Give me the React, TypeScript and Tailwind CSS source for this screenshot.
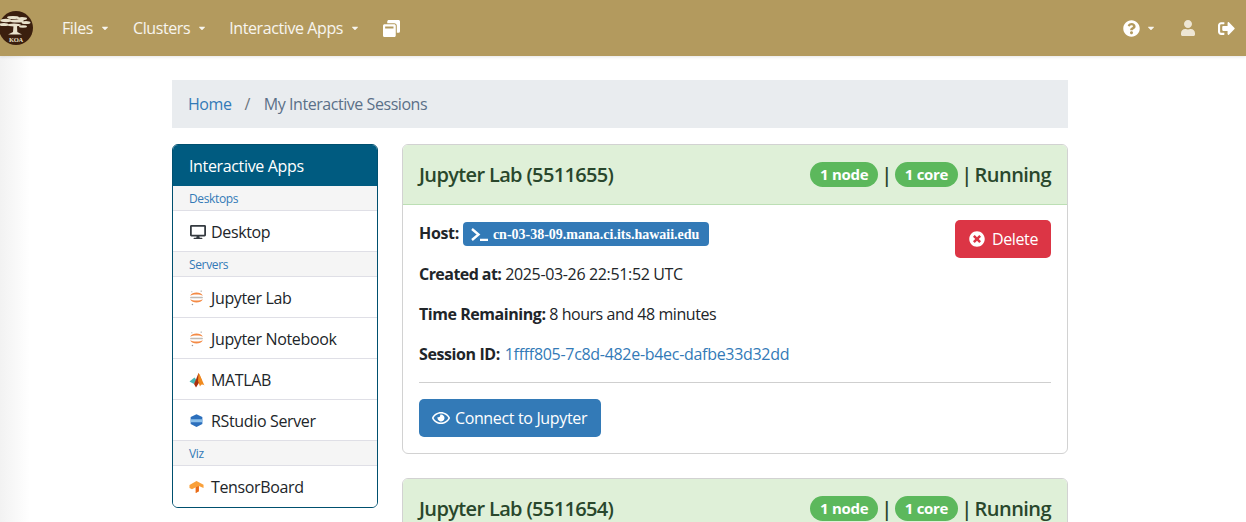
import React from "react";
import { FaCaretDown, FaWindowRestore, FaQuestionCircle, FaUser, FaSignOutAlt, FaDesktop, FaTimesCircle, FaRegEye } from "react-icons/fa";

const JupyterIcon = () => (
  <svg viewBox="0 0 16 16" className="w-[17px] h-[17px] shrink-0 -ml-[2px] opacity-85">
    <path d="M2 6.4 C4 2.4 12 2.4 14 6.4 C11.5 4.8 4.5 4.8 2 6.4Z" fill="#f37726" />
    <path d="M2 9.6 C4 13.6 12 13.6 14 9.6 C11.5 11.2 4.5 11.2 2 9.6Z" fill="#f37726" />
    <rect x="2" y="7.2" width="12" height="1.6" rx="0.8" fill="#b5aea8" />
    <circle cx="12.4" cy="2" r="0.7" fill="#8a8a8a" />
    <circle cx="3.6" cy="2.6" r="0.5" fill="#8a8a8a" />
    <circle cx="4.2" cy="14.6" r="0.7" fill="#8a8a8a" />
  </svg>
);
const MatlabIcon = () => (
  <svg viewBox="0 0 16 16" className="w-[16px] h-[16px] shrink-0 -ml-[1px]">
    <path d="M0.5 9.5 L5.5 5.5 L7.5 8 L5 12Z" fill="#49b6b6" />
    <path d="M5 12 L7 7.5 L9.5 1 L12.5 7.5 L10.5 10 L7 15.5 Z" fill="#a92f0d" />
    <path d="M9.5 1 C11.5 3 13.5 10 15.5 13.5 C14 12.5 12.5 11.5 11 14.5 L9 9Z" fill="#f08a1e" />
  </svg>
);
const RStudioIcon = () => (
  <svg viewBox="0 0 16 16" className="w-[17px] h-[17px] shrink-0 -ml-[2.5px]">
    <path d="M8 2 L13.5 4.8 V11.2 L8 14 L2.5 11.2 V4.8Z" fill="#2c6fbc" />
    <path d="M2.5 6.8 H13.5 V9.6 H2.5Z" fill="#8cc0ea" />
  </svg>
);
const TensorIcon = () => (
  <svg viewBox="0 0 16 16" className="w-[15px] h-[15px] shrink-0 -ml-[1px]">
    <path d="M0.5 6.5 L8 2 L15.5 6 V9.5 L10.5 7.5 V13 L7.2 15 V8.8 L3.2 11 L0.5 9.5Z" fill="#f9a03a" />
    <path d="M7.2 8.8 L10.5 7.5 V13 L7.2 15Z" fill="#e8691a" />
  </svg>
);

const KoaLogo = () => (
  <svg viewBox="0 0 36 40" className="w-[36px] h-[40px] -ml-[2px]">
    <circle cx="18" cy="20" r="17" fill="#3b1f0e" />
    <g fill="#e9e2cc">
      <ellipse cx="15" cy="9.5" rx="6" ry="1.6" />
      <ellipse cx="24" cy="10.5" rx="5" ry="1.5" />
      <ellipse cx="8" cy="12.5" rx="5.5" ry="1.7" />
      <ellipse cx="19" cy="13" rx="7" ry="1.6" />
      <ellipse cx="28" cy="14.5" rx="4.5" ry="1.6" />
      <ellipse cx="6" cy="16.5" rx="4.5" ry="1.6" />
      <ellipse cx="16" cy="17" rx="7" ry="1.5" />
      <ellipse cx="25" cy="18.5" rx="4" ry="1.2" />
      <path d="M15.5 18 H19 L19.3 24 L24 26.5 H10 L15 24Z" />
    </g>
    <text x="18" y="34" textAnchor="middle" fontSize="6.5" fontWeight="700" fill="#e9e2cc" fontFamily="'Liberation Serif', serif">KOA</text>
  </svg>
);

const NavItem = ({ label, shift }: { label: string; shift?: boolean }) => (
  <div className={`flex items-center gap-[7px] text-white/90 ${shift ? "-ml-[1px]" : ""}`}>
    <span>{label}</span>
    <FaCaretDown className="w-[10px] h-[10px] text-white/90" />
  </div>
);

const Section = ({ label }: { label: string }) => (
  <div className="h-[25px] pl-[16px] pt-[1px] flex items-center text-[12px] text-[#337ab7] bg-[#f5f5f5] border-b border-[#dfdfe6]">{label}</div>
);

const Item = ({ icon, label, last }: { icon: React.ReactNode; label: string; last?: boolean }) => (
  <div className={`h-[41px] pl-[17px] flex items-center gap-[4px] text-[#212529] bg-white ${last ? "" : "pt-[1px] border-b border-[#dfdfe6]"}`}>
    <span className="w-[17px] flex justify-start">{icon}</span>
    <span>{label}</span>
  </div>
);

const Badge = ({ children }: { children: React.ReactNode }) => (
  <span className="inline-flex items-center justify-center h-[25px] px-[10px] rounded-full bg-[#5cb85c] text-white text-[15px] font-bold tracking-[-0.3px]">{children}</span>
);

const CardHeader = ({ title }: { title: string }) => (
  <div className="h-[60px] px-4 flex items-center justify-between bg-[#dff0d8] border-b border-[#bcdfb4] text-[#29472c] text-[20px] font-semibold tracking-[-0.55px]">
    <span className="tracking-[-0.65px]">{title}</span>
    <div className="flex items-center gap-[3px]">
      <Badge>1 node</Badge>
      <span>|</span>
      <Badge>1 core</Badge>
      <span>|</span>
      <span>Running</span>
    </div>
  </div>
);

export default function App() {
  return (
    <div className="relative h-[522px] overflow-hidden bg-white text-[16px] text-[#212529] font-['Open_Sans','Liberation_Sans',sans-serif] tracking-[-0.35px]">
      <div className="absolute left-0 top-[56px] bottom-0 w-[30px] bg-gradient-to-r from-[#f2f2f2] to-white" />
      <nav className="relative h-[56px] bg-[#b39a5e] flex items-center justify-between shadow-[0_1px_3px_rgba(0,0,0,0.1)] pr-[11px]">
        <div className="flex items-center">
          <div className="w-[62px]"><KoaLogo /></div>
          <div className="flex items-center gap-[23px] tracking-[-0.4px]">
            <NavItem label="Files" />
            <NavItem label="Clusters" />
            <NavItem label="Interactive Apps" shift />
            <FaWindowRestore className="w-[17px] h-[17px] text-white" />
          </div>
        </div>
        <div className="flex items-center">
          <FaQuestionCircle className="w-[17px] h-[17px] text-white" />
          <FaCaretDown className="ml-[6px] w-[10px] h-[10px] text-white/90" />
          <FaUser className="ml-[24px] w-[16px] h-[16px] text-[#eee6d4]" />
          <FaSignOutAlt className="ml-[22px] w-[17px] h-[17px] text-white" />
        </div>
      </nav>

      <div className="relative w-[896px] ml-[172px] pt-[24px]">
        <div className="h-[48px] bg-[#e9ecef] flex items-center px-[16px] gap-[13px] mb-[16px] tracking-[-0.45px]">
          <span className="text-[#337ab7]">Home</span>
          <span className="text-[#6c757d]">/</span>
          <span className="text-[#5b7088] ml-[1px]">My Interactive Sessions</span>
        </div>

        <div className="flex gap-[24px] items-start">
          <aside className="w-[206px] shrink-0 border border-[#00506f] rounded-[6px] overflow-hidden">
            <div className="h-[41px] bg-[#005b80] text-white pl-[16px] flex items-center">Interactive Apps</div>
            <Section label="Desktops" />
            <Item icon={<FaDesktop className="w-[16px] h-[16px] text-[#343a40]" />} label="Desktop" />
            <Section label="Servers" />
            <Item icon={<JupyterIcon />} label="Jupyter Lab" />
            <Item icon={<JupyterIcon />} label="Jupyter Notebook" />
            <Item icon={<MatlabIcon />} label="MATLAB" />
            <Item icon={<RStudioIcon />} label="RStudio Server" />
            <Section label="Viz" />
            <Item icon={<TensorIcon />} label="TensorBoard" last />
          </aside>

          <main className="flex-1 flex flex-col gap-[24px]">
            <section className="border border-[#d2d2d2] rounded-[6px] overflow-hidden h-[310px]">
              <CardHeader title="Jupyter Lab (5511655)" />
              <div className="p-4 relative">
                <div className="absolute top-[15px] right-[16px] h-[38px] w-[96px] bg-[#dc3545] rounded-[5px] text-white flex items-center justify-center gap-[7px] pl-[1px]">
                  <FaTimesCircle className="w-[16px] h-[16px]" />
                  <span>Delete</span>
                </div>
                <div className="flex flex-col">
                  <div className="flex items-center gap-[4px] h-[24px]">
                    <b>Host:</b>
                    <span className="relative top-[1px] inline-flex items-center h-[24px] pl-[8px] pr-[10px] bg-[#337ab7] rounded-[4px] text-white text-[14px] font-bold tracking-normal font-['Liberation_Serif',serif]">
                      <svg viewBox="0 0 18 13" className="w-[18px] h-[13px] mr-[4px]" fill="none" stroke="white" strokeWidth="2.4"><path d="M1 1 L7.5 6.5 L1 12" /><path d="M9 12 H17" /></svg>
                      cn-03-38-09.mana.ci.its.hawaii.edu
                    </span>
                  </div>
                  <div className="mt-[17px] h-[24px] flex items-center"><b className="tracking-[-0.55px]">Created at:</b>&nbsp;2025-03-26 22:51:52 UTC</div>
                  <div className="mt-[16px] h-[24px] flex items-center tracking-[-0.45px]"><b>Time Remaining:</b>&nbsp;8 hours and 48 minutes</div>
                  <div className="mt-[16px] h-[24px] flex items-center tracking-[-0.4px]"><b>Session ID:</b>&nbsp;<span className="text-[#337ab7] tracking-[-0.3px] ml-[1px]">1ffff805-7c8d-482e-b4ec-dafbe33d32dd</span></div>
                  <hr className="mt-[16px] border-[#cfcfcf]" />
                  <div className="mt-[16px] h-[38px] w-[182px] bg-[#337ab7] rounded-[5px] text-white flex items-center justify-center gap-[5px] pr-[1px]">
                    <FaRegEye className="w-[18px] h-[18px]" />
                    <span>Connect to Jupyter</span>
                  </div>
                </div>
              </div>
            </section>
            <section className="border border-[#d2d2d2] rounded-[6px] overflow-hidden h-[310px]">
              <CardHeader title="Jupyter Lab (5511654)" />
            </section>
          </main>
        </div>
      </div>
    </div>
  );
}
